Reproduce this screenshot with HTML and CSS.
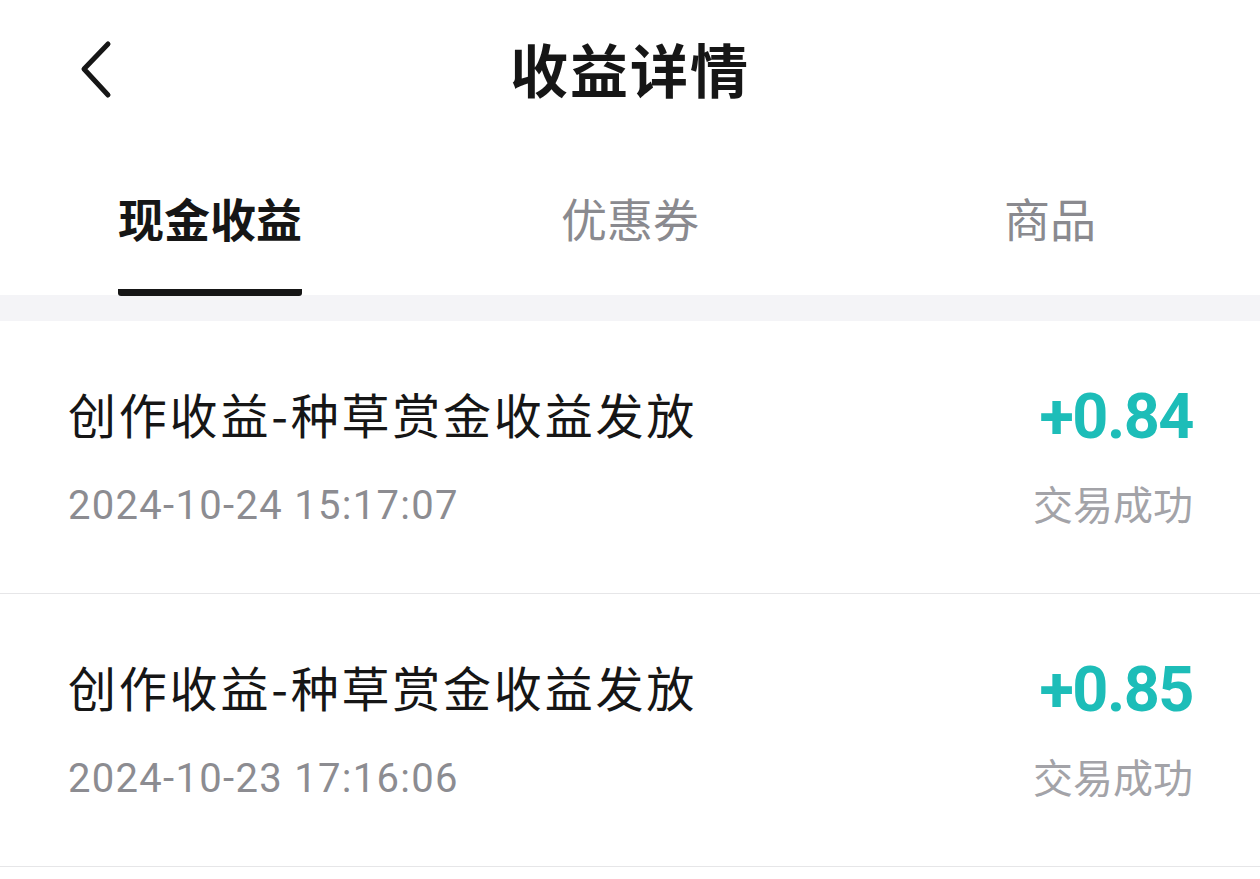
FILE: index.html
```html
<!DOCTYPE html>
<html lang="zh-CN">
<head>
  <meta charset="UTF-8">
  <meta name="viewport" content="width=device-width, initial-scale=1.0">
  <title>收益详情</title>
  <link rel="stylesheet" href="styles.css">
</head>
<body>
  <div class="page">
    <header class="topbar">
      <a class="back" href="#" aria-label="返回">
        <svg width="40" height="60" viewBox="0 0 40 60">
          <path d="M32 4 L8 29 L32 55" fill="none" stroke="#161616" stroke-width="5" stroke-linecap="round" stroke-linejoin="round"/>
        </svg>
      </a>
      <h1>收益详情</h1>
    </header>

    <nav class="tabs">
      <div class="tab active"><span>现金收益</span></div>
      <div class="tab"><span>优惠券</span></div>
      <div class="tab"><span>商品</span></div>
    </nav>

    <div class="band"></div>

    <ul class="records">
      <li class="record">
        <div class="info">
          <div class="name">创作收益-种草赏金收益发放</div>
          <div class="time">2024-10-24 15:17:07</div>
        </div>
        <div class="result">
          <div class="amount">+0.84</div>
          <div class="status">交易成功</div>
        </div>
      </li>
      <li class="record">
        <div class="info">
          <div class="name">创作收益-种草赏金收益发放</div>
          <div class="time">2024-10-23 17:16:06</div>
        </div>
        <div class="result">
          <div class="amount">+0.85</div>
          <div class="status">交易成功</div>
        </div>
      </li>
    </ul>
  </div>
</body>
</html>
```

FILE: styles.css
```css
body {
  margin: 0;
  background-color: #ffffff;
  font-family: "Noto Sans CJK SC", "Noto Sans", sans-serif;
  color: #161616;
}

.page {
  width: 1260px;
}

/* header */
.topbar {
  position: relative;
  height: 136px;
  display: flex;
  align-items: center;
  justify-content: center;
}

.back {
  position: absolute;
  left: 76px;
  top: 40px;
  display: block;
  width: 40px;
  height: 60px;
}

.topbar h1 {
  margin: 0;
  font-size: 58px;
  font-weight: 700;
  line-height: 70px;
  letter-spacing: 2px;
}

/* tabs */
.tabs {
  display: flex;
  height: 159px;
}

.tab {
  flex: 1;
  display: flex;
  justify-content: center;
  align-items: flex-start;
  padding-top: 52px;
  box-sizing: border-box;
}

.tab span {
  display: block;
  font-size: 46px;
  line-height: 58px;
  color: #8a8a8f;
  padding-bottom: 43px;
  border-bottom: 7px solid transparent;
  border-radius: 3px;
}

.tab.active span {
  color: #161616;
  font-weight: 700;
  border-bottom-color: #161616;
}

.band {
  height: 26px;
  background-color: #f4f4f7;
}

/* list */
.records {
  list-style: none;
  margin: 0;
  padding: 0;
}

.record {
  display: flex;
  justify-content: space-between;
  height: 272px;
  padding: 0 67px 0 68px;
  border-bottom: 1px solid #e6e6e8;
}

.info,
.result {
  display: flex;
  flex-direction: column;
}

.result {
  align-items: flex-end;
}

.name {
  margin-top: 63px;
  font-size: 48px;
  line-height: 58px;
  letter-spacing: 2.8px;
}

.time {
  margin-top: 40px;
  font-family: "Roboto", "Noto Sans", sans-serif;
  font-size: 40px;
  line-height: 48px;
  letter-spacing: 1.3px;
  color: #8c8c91;
}

.amount {
  margin-top: 60px;
  font-family: "Roboto", "Noto Sans", sans-serif;
  font-size: 63px;
  font-weight: 700;
  line-height: 72px;
  letter-spacing: -1.5px;
  color: #1dbdb8;
}

.status {
  margin-top: 26px;
  font-size: 40px;
  line-height: 48px;
  color: #a3a3a8;
}
```
